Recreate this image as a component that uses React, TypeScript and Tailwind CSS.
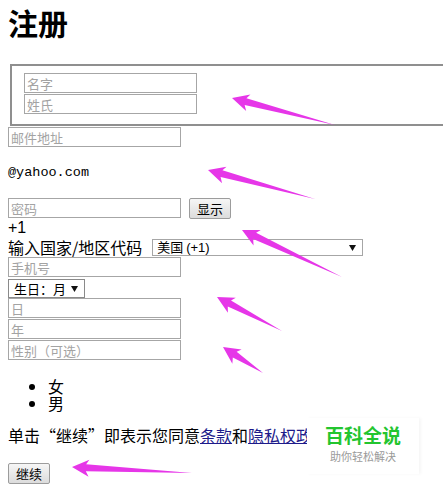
import React from 'react'

const CJK = { fontFamily: '"Noto Sans CJK SC", "Liberation Sans", sans-serif' }

const ARROWS = [
  { x1: 232, y1: 98, x2: 335, y2: 125 },
  { x1: 208, y1: 170, x2: 315, y2: 199 },
  { x1: 242, y1: 230, x2: 342, y2: 277 },
  { x1: 217, y1: 297, x2: 282, y2: 331 },
  { x1: 223, y1: 347, x2: 263, y2: 373 },
  { x1: 72, y1: 467, x2: 192, y2: 473 },
]

function Arrow({ x1, y1, x2, y2 }: { x1: number; y1: number; x2: number; y2: number }) {
  const len = Math.hypot(x2 - x1, y2 - y1)
  const deg = (Math.atan2(y2 - y1, x2 - x1) * 180) / Math.PI
  return (
    <polygon
      points={`0,0 17,-8 14,-3.5 ${len},0 14,3.5 17,9`}
      transform={`translate(${x1} ${y1}) rotate(${deg})`}
      fill="#e636e8"
    />
  )
}

function Caret() {
  return (
    <svg width="7" height="6" viewBox="0 0 7 6">
      <path d="M0 0 H7 L3.5 6 Z" fill="#111" />
    </svg>
  )
}

function Field({ placeholder, className = '' }: { placeholder: string; className?: string }) {
  return (
    <input
      placeholder={placeholder}
      className={`block h-[20px] w-[173px] border border-[#a6a6a6] bg-white px-[2px] text-[13px] text-black outline-none placeholder:text-[#a3a3a3] ${className}`}
      style={CJK}
    />
  )
}

function Btn({ label, className = '' }: { label: string; className?: string }) {
  return (
    <button
      className={`flex h-[21px] items-center justify-center rounded-[2px] border border-[#9c9c9c] bg-gradient-to-b from-[#f6f6f6] to-[#dcdcdc] text-[13px] text-black ${className}`}
      style={CJK}
    >
      {label}
    </button>
  )
}

export default function App() {
  return (
    <div className="relative h-[495px] w-full overflow-hidden bg-white px-2 text-black" style={CJK}>
      <h1 className="mt-[4px] h-[36px] text-[30px] leading-[36px] font-bold">注册</h1>

      {/* name group */}
      <div className="mt-[24px] ml-[2px] w-[460px] border-2 border-[#8f8f8f] pt-[7px] pb-[10px] pl-[12px]">
        <Field placeholder="名字" />
        <Field placeholder="姓氏" className="mt-[1px]" />
      </div>

      <Field placeholder="邮件地址" className="mt-[1px]" />

      <div className="mt-[18px] h-[15px] text-[13.5px] leading-[15px]" style={{ fontFamily: '"Liberation Mono", monospace' }}>
        @yahoo.com
      </div>

      <div className="mt-[18px] flex items-start gap-[8px]">
        <Field placeholder="密码" />
        <Btn label="显示" className="w-[42px]" />
      </div>

      <div className="h-[18px] text-[16px] leading-[18px]" style={{ fontFamily: '"Liberation Sans", sans-serif' }}>
        +1
      </div>

      <div className="flex h-[20px] items-start">
        <span className="text-[16px] leading-[20px]">输入国家/地区代码</span>
        <div className="mt-[2px] ml-[10px] flex h-[17px] w-[211px] items-center justify-between border border-[#a6a6a6] pr-[6px] pl-[4px] text-[13px]">
          <span>
            美国 <span style={{ fontFamily: '"Liberation Sans", sans-serif' }}>(+1)</span>
          </span>
          <Caret />
        </div>
      </div>

      <Field placeholder="手机号" />

      <div className="mt-[2px] flex h-[19px] w-[77px] items-center justify-between border border-[#8a8a8a] pr-[6px] pl-[5px] text-[13px]">
        <span>生日：月</span>
        <Caret />
      </div>

      <Field placeholder="日" />
      <Field placeholder="年" className="mt-[1px]" />
      <Field placeholder="性别（可选）" className="mt-[1px]" />

      <ul className="mt-[18px] list-disc pl-[40px] text-[16px] leading-[17px]">
        <li>女</li>
        <li>男</li>
      </ul>

      <p className="mt-[14px] h-[18px] text-[16px] leading-[18px] whitespace-nowrap">
        单击“继续”即表示您同意<a className="text-[#1d1a8a] underline">条款</a>和<a className="text-[#1d1a8a] underline">隐私权政策</a>。
      </p>

      <Btn label="继续" className="mt-[19px] w-[42px]" />

      {/* watermark */}
      <div className="absolute top-[418px] left-[307px] flex h-[56px] w-[112px] flex-col items-center bg-white pt-[6px] shadow-[2px_0_3px_rgba(0,0,0,0.04)]">
        <span className="text-[19px] leading-[22px] font-bold text-[#23c52f]">百科全说</span>
        <span className="mt-[4px] text-[11px] leading-[13px] text-[#9a9a9a]">助你轻松解决</span>
      </div>

      {/* annotation arrows */}
      <svg className="pointer-events-none absolute top-0 left-0" width="443" height="495">
        {ARROWS.map((a, i) => (
          <Arrow key={i} {...a} />
        ))}
      </svg>
    </div>
  )
}
